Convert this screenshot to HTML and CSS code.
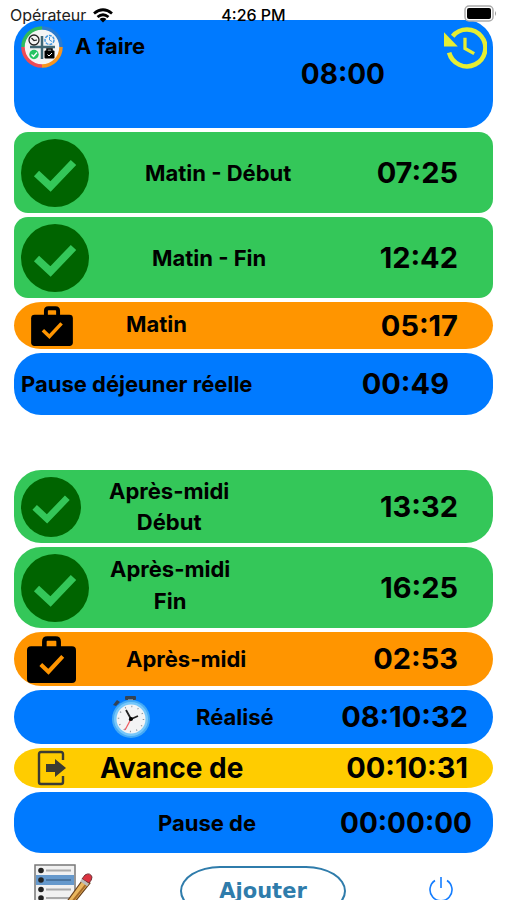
FILE: index.html
```html
<!DOCTYPE html>
<html lang="fr">
<head>
<meta charset="utf-8">
<meta name="viewport" content="width=device-width, initial-scale=1">
<title>Pointage</title>
<link rel="stylesheet" href="styles.css">
</head>
<body>
<svg class="defs" aria-hidden="true">
  <symbol id="check" viewBox="0 0 68 68">
    <circle cx="34" cy="34" r="34" fill="#006400"/>
    <path d="M15.500 34.500 29.500 47.500 52.500 23.500" fill="none" stroke="#34c759" stroke-width="7.500"/>
  </symbol>
  <symbol id="bag" viewBox="0 0 48 46">
    <path d="M17 11V5.500Q17 2.500 20 2.500H28Q31 2.500 31 5.500V11" fill="none" stroke="#000" stroke-width="4.500"/>
    <rect y="10" width="48" height="36" rx="4"/>
    <path d="M13.500 28 21 35 35 20" fill="none" stroke="#ff9500" stroke-width="4"/>
  </symbol>
</svg>
<div class="app">
  <header class="status">
    <div class="network">
      <span class="carrier">Opérateur</span>
      <svg class="wifi" viewBox="0 0 20 15" role="img" aria-label="Wi-Fi"><g fill="none" stroke="#000" stroke-width="2.800"><path d="M1 5.500Q10-2 19 5.500"/><path d="M4.500 9Q10 4.500 15.500 9"/></g><path d="M6.500 11Q10 8.500 13.500 11L10 14.500Z"/></svg>
    </div>
    <span class="clock">4:26 PM</span>
    <svg class="battery" viewBox="0 0 33 17" role="img" aria-label="Batterie"><rect x="1" y="1" width="28" height="15" rx="4" fill="#fff" stroke="#aaa" stroke-width="1.500"/><rect x="3" y="3" width="24" height="11" rx="2"/><path d="M31 6Q33 8.500 31 11Z" fill="#999"/></svg>
  </header>
  <main class="rows">
    <section class="row blue todo">
      <svg class="icon logo" viewBox="0 0 42 42" aria-hidden="true">
        <circle cx="21" cy="21" r="18" fill="#f4f4f4"/>
        <g fill="none" stroke-width="3.500">
          <path d="M2 21A19 19 0 0 1 21 2" stroke="#30b95c"/>
          <path d="M21 2A19 19 0 0 1 40 21" stroke="#2a7bd0"/>
          <path d="M40 21A19 19 0 0 1 21 40" stroke="#f7941d"/>
          <path d="M21 40A19 19 0 0 1 2 21" stroke="#ee4b55"/>
          <path d="M21 10V33M9 21H34" stroke="#3d6675" stroke-width="2.500"/>
          <circle cx="13" cy="14" r="5" stroke="#222" stroke-width="1.300"/>
          <path d="M10.500 12 13 14.500 16 14" stroke="#222" stroke-width="1.200"/>
          <circle cx="28.500" cy="14" r="4.500" stroke="#4397df" stroke-width="1.500" stroke-dasharray="3 1"/>
          <path d="M28.500 11V14L31 15.500" stroke="#4397df" stroke-width="1"/>
        </g>
        <circle cx="13" cy="28.500" r="4.700" fill="#24c463"/>
        <path d="M10.500 28.500 12.500 30.500 16 26.500" fill="none" stroke="#fff" stroke-width="1.300"/>
        <path d="M26 25V23H31V25" fill="none" stroke="#000" stroke-width="1.500"/>
        <rect x="23.500" y="24.500" width="10" height="8" rx="1"/>
        <path d="M26.500 28.500 28 30 31 27" fill="none" stroke="#fff"/>
      </svg>
      <h1 class="label">A faire</h1>
      <time class="time">08:00</time>
      <button class="history" aria-label="Historique"><svg viewBox="0 0 42 42" aria-hidden="true"><path d="M5 26A18 18 0 1 0 8.500 10" fill="none" stroke="#e6ee33" stroke-width="4.500"/><path d="M0 6V20H13.500Z" fill="#e6ee33"/><path d="M20.500 11.500V22L29.500 27" fill="none" stroke="#e6ee33" stroke-width="3.200"/></svg></button>
    </section>
    <section class="row green square am-start"><svg class="icon check"><use href="#check"/></svg><h2 class="label">Matin - Début</h2><time class="time">07:25</time></section>
    <section class="row green square am-end"><svg class="icon check"><use href="#check"/></svg><h2 class="label">Matin - Fin</h2><time class="time">12:42</time></section>
    <section class="row orange am-total"><svg class="icon bag-small"><use href="#bag"/></svg><h2 class="label">Matin</h2><time class="time">05:17</time></section>
    <section class="row blue lunch"><h2 class="label">Pause déjeuner réelle</h2><time class="time">00:49</time></section>
    <section class="row green pm-start"><svg class="icon check-small"><use href="#check"/></svg><h2 class="label">Après-midi<br>Début</h2><time class="time">13:32</time></section>
    <section class="row green pm-end"><svg class="icon check"><use href="#check"/></svg><h2 class="label">Après-midi<br>Fin</h2><time class="time">16:25</time></section>
    <section class="row orange pm-total"><svg class="icon bag"><use href="#bag"/></svg><h2 class="label">Après-midi</h2><time class="time">02:53</time></section>
    <section class="row blue done">
      <svg class="icon watch" viewBox="0 0 40 44" aria-hidden="true">
        <rect x="14" y="1" width="11" height="4" rx="1" fill="#344354"/><rect x="17" y="4" width="5" height="4" fill="#71869b"/>
        <path d="M2 10 6 5 9 7 5 11Z" fill="#344354"/>
        <circle cx="20" cy="24" r="19" fill="#45aaf5"/><circle cx="20" cy="24" r="17" fill="#76c7fa"/><circle cx="20" cy="24" r="14.500" fill="#f3f4f5"/>
        <circle cx="20" cy="24" r="12.500" fill="none" stroke="#8b9299" stroke-width="1.500" stroke-dasharray="1 5.545"/>
        <path d="M20 24 14 35" stroke="#ee5c62" stroke-width="1.300"/><path d="M20 24 15 15M18 25 27 21" stroke="#222" stroke-width="1.800"/><circle cx="20" cy="24" r="2"/>
      </svg>
      <h2 class="label">Réalisé</h2><time class="time">08:10:32</time>
    </section>
    <section class="row yellow ahead">
      <svg class="icon exit" viewBox="0 0 30 36" aria-hidden="true"><path d="M26 10V4Q26 2 24 2H4Q2 2 2 4V32Q2 34 4 34H24Q26 34 26 32V26" fill="none" stroke="#3b3b32" stroke-width="2.400"/><path d="M9 14H18V9L29 18 18 27V22H9Z" fill="#3b3b32"/></svg>
      <h2 class="label">Avance de</h2><time class="time">00:10:31</time>
    </section>
    <section class="row blue break"><h2 class="label">Pause de</h2><time class="time">00:00:00</time></section>
  </main>
  <footer class="actions">
    <button class="list" aria-label="Modifier la liste"><svg viewBox="0 0 60 48" aria-hidden="true">
      <rect x="1" y="1" width="40" height="50" fill="#f1f1f1" stroke="#777" stroke-width="1.500"/><rect x="2" y="11" width="38" height="10" fill="#6699cc"/>
      <path d="M12 6.500H37M12 25.500H37M12 34H37M12 42H37" stroke="#aaa" stroke-width="2"/><path d="M12 16H37" stroke="#42698f" stroke-width="1.500"/>
      <g fill="#222"><circle cx="7" cy="6.500" r="2.800"/><circle cx="7" cy="16" r="2.800"/><circle cx="7" cy="25.500" r="2.800"/><circle cx="7" cy="34" r="2.800"/><circle cx="7" cy="42" r="2.800"/></g>
      <path d="M29 43 50 14 56 19 36 44Z" fill="#eab65e" stroke="#69401c" stroke-width="1.200"/><path d="M34 43 54 18" stroke="#a96c28" stroke-width="2"/><path d="M48 15 51 11Q56 8 58 13Q58 16 55 19Z" fill="#dc3340" stroke="#713036"/><path d="M47 16 54 21" stroke="#bbb" stroke-width="3"/>
    </svg></button>
    <button class="add">Ajouter</button>
    <button class="power" aria-label="Quitter"><svg viewBox="0 0 24 25" aria-hidden="true"><path d="M6 4.500A11 11 0 1 0 18 4.500M12 1V12" fill="none" stroke="#147dff" stroke-width="1.600"/></svg></button>
  </footer>
</div>
</body>
</html>
```
FILE: styles.css
```css
* { box-sizing: border-box; }
body { margin: 0; background: #fff; color: #000; font-family: Inter, "Liberation Sans", sans-serif; }
button { border: 0; padding: 0; background: none; font: inherit; }
svg { display: block; }
.defs { position: absolute; width: 0; height: 0; }
.app { height: 100vh; overflow: hidden; display: flex; flex-direction: column; }

.status { position: relative; z-index: 1; flex: none; height: 20px; padding: 5px 10px 0 10px; display: grid; grid-template-columns: 1fr auto 1fr; align-items: center; font-size: 16px; line-height: 20px; }
.network { display: flex; align-items: center; gap: 7px; }
.carrier { color: #222; }
.wifi { width: 20px; height: 15px; }
.clock { font-weight: 500; }
.battery { width: 33px; height: 17px; justify-self: end; margin-top: -3px; }

.rows { flex: none; margin: 0 14px; display: flex; flex-direction: column; gap: 4px; }
.row { display: flex; align-items: center; padding-left: 7px; border-radius: 27px; }
.blue { background: #007aff; }
.green { background: #34c759; }
.orange { background: #ff9500; border-radius: 27px / 50%; }
.yellow { background: #fc0; border-radius: 27px / 50%; }
.square { border-radius: 14px; }
.icon { flex: none; }
.label { margin: 0; font-size: 22px; line-height: 32px; font-weight: 700; text-align: center; white-space: nowrap; }
.time { margin-left: auto; margin-right: 35px; font-size: 29px; line-height: 36px; font-weight: 700; }

.todo { height: 108px; align-items: flex-start; padding-top: 6px; }
.logo { width: 42px; height: 42px; }
.todo .label { margin: 4px 0 0 12px; }
.todo .time { margin: 30px 59px 0 auto; }
.todo .time, .break .time { font-size: 28px; }
.history { margin-right: 6px; }
.history svg { width: 43px; height: 43px; }

.check { width: 68px; height: 68px; }
.check-small { width: 60px; height: 60px; }
.am-start, .am-end, .pm-end { height: 81px; }
.am-start .label { margin-left: 56px; }
.am-end .label { margin-left: 63px; }
.am-total { height: 47px; padding-left: 17px; }
.bag-small { width: 42px; height: 40px; }
.am-total .label { margin-left: 53px; padding-bottom: 4px; }
.lunch { height: 62px; }
.lunch .time { margin-right: 44px; }

.pm-start { height: 73px; margin-top: 51px; }
.pm-start .label { margin-left: 28px; line-height: 31px; }
.pm-end .label { margin-left: 21px; padding-bottom: 6px; }
.pm-total { height: 54px; padding-left: 13px; }
.bag { width: 49px; height: 47px; }
.pm-total .label { margin-left: 50px; }
.done { height: 54px; padding-left: 97px; }
.watch { width: 40px; height: 44px; }
.done .label { margin-left: 45px; }
.done .time, .ahead .time { margin-right: 25px; }
.ahead { height: 40px; padding-left: 23px; }
.exit { width: 30px; height: 36px; }
.ahead .label { margin-left: 33px; font-size: 28px; }
.break { height: 61px; padding-left: 144px; }
.break .time { margin-right: 21px; }

.actions { flex: 1; min-height: 0; overflow: hidden; padding: 11px 54px 0 34px; display: flex; justify-content: space-between; align-items: flex-start; }
.list svg { width: 60px; height: 48px; }
.add { height: 50px; width: 166px; margin: 2px 0 0 3px; border: 2px solid #2f7cab; border-radius: 40px / 25px; color: #2f7cab; font-family: "DejaVu Sans", sans-serif; font-size: 21px; line-height: 16px; font-weight: 700; }
.power { margin-top: 12px; }
.power svg { width: 24px; height: 25px; }
```
